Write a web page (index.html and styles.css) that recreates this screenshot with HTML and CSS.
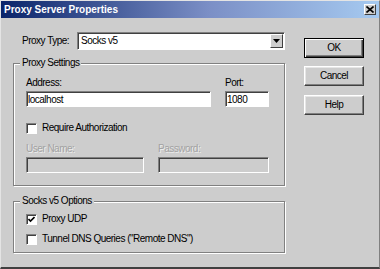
FILE: index.html
```html
<!DOCTYPE html>
<html lang="en">
<head>
    <meta charset="UTF-8">
    <title>Proxy Server Properties</title>
    <link rel="stylesheet" href="styles.css">
</head>
<body>
    <div class="window">
        <div class="titlebar">
            <span class="title">Proxy Server Properties</span>
            <span class="close-btn">
                <svg width="8" height="7" viewBox="0 0 8 7"><path d="M0.5 0.5L7.5 6.5M7.5 0.5L0.5 6.5" stroke="#000" stroke-width="1.6"/></svg>
            </span>
        </div>

        <div class="content">
            <div class="main">
                <div class="type-row">
                    <span class="type-label">Proxy Type:</span>
                    <div class="combo">
                        <span class="combo-text">Socks v5</span>
                        <span class="combo-btn">
                            <svg width="7" height="4" viewBox="0 0 7 4"><path d="M0 0H7L3.5 4Z" fill="#000"/></svg>
                        </span>
                    </div>
                </div>

                <fieldset class="group settings">
                    <legend>Proxy Settings</legend>
                    <div class="group-body">
                        <div class="row first">
                            <div class="field address">
                                <label>Address:</label>
                                <input type="text" value="localhost">
                            </div>
                            <div class="field port">
                                <label>Port:</label>
                                <input type="text" value="1080">
                            </div>
                        </div>
                        <div class="check auth">
                            <span class="box"></span>
                            <span>Require Authorization</span>
                        </div>
                        <div class="row">
                            <div class="field user disabled">
                                <label>User Name:</label>
                                <input type="text" disabled>
                            </div>
                            <div class="field pass disabled">
                                <label>Password:</label>
                                <input type="password" disabled>
                            </div>
                        </div>
                    </div>
                </fieldset>

                <fieldset class="group socks">
                    <legend>Socks v5 Options</legend>
                    <div class="group-body">
                        <div class="check udp">
                            <span class="box">
                                <svg width="7" height="7" viewBox="0 0 7 7"><path d="M0.5 3L2.5 5L6.5 1" stroke="#000" stroke-width="1.6" fill="none"/></svg>
                            </span>
                            <span>Proxy UDP</span>
                        </div>
                        <div class="check dns">
                            <span class="box"></span>
                            <span>Tunnel DNS Queries ("Remote DNS")</span>
                        </div>
                    </div>
                </fieldset>
            </div>

            <div class="buttons">
                <button class="btn default">OK</button>
                <button class="btn">Cancel</button>
                <button class="btn help">Help</button>
            </div>
        </div>
    </div>
</body>
</html>
```

FILE: styles.css
```css
body {
    margin: 0;
    font-family: "Liberation Sans", Arial, sans-serif;
    font-size: 10px;
    line-height: 12px;
    letter-spacing: -0.5px;
    color: #000;
    background: #cdcdcd;
}
.window {
    width: 380px;
    height: 269px;
    box-sizing: border-box;
    background: #cdcdcd;
    border-top: 1px solid #e4e4e4;
    border-left: 1px solid #e4e4e4;
    border-right: 1px solid #808080;
    border-bottom: 2px solid #404040;
    overflow: hidden;
}
.titlebar {
    height: 17px;
    display: flex;
    align-items: center;
    justify-content: space-between;
    padding: 0 3px 0 3px;
    background: linear-gradient(to right, #0a246a, #7b8fc6 55%, #a6caf0);
    color: #fff;
}
.title {
    font-weight: bold;
    letter-spacing: 0;
}
.close-btn {
    width: 12px;
    height: 11px;
    box-sizing: border-box;
    display: flex;
    align-items: center;
    justify-content: center;
    background: #cdcdcd;
    border: 1px solid;
    border-color: #fff #404040 #404040 #fff;
}

.content {
    display: flex;
    padding: 14px 0 0 12px;
}
.main {
    width: 272px;
}

/* proxy type combo */
.type-row {
    display: flex;
    align-items: center;
    height: 18px;
}
.type-label {
    width: 55px;
    padding-left: 9px;
}
.combo {
    flex: 1;
    height: 18px;
    box-sizing: border-box;
    display: flex;
    align-items: center;
    background: #fff;
    border: 1px solid;
    border-color: #808080 #fff #fff #808080;
    box-shadow: inset 1px 1px #404040;
}
.combo-text {
    flex: 1;
    padding-left: 3px;
}
.combo-btn {
    width: 13px;
    height: 14px;
    margin-right: 1px;
    box-sizing: border-box;
    display: flex;
    align-items: center;
    justify-content: center;
    background: #cdcdcd;
    border: 1px solid;
    border-color: #fff #404040 #404040 #fff;
}

/* group boxes */
.group {
    margin: 7px 0 0 0;
    padding: 0 0 12px 6px;
    border: 1px solid #808080;
    box-shadow: inset 1px 1px #fff, 1px 1px #fff;
}
.group legend {
    padding: 0 2px;
    background: #cdcdcd;
    line-height: 12px;
}
.group-body {
    padding-left: 6px;
}
.socks {
    margin-top: 9px;
    padding-bottom: 7px;
}

.row {
    display: flex;
    gap: 14px;
    margin-top: 9px;
}
.row.first {
    margin-top: 8px;
}
.field label {
    display: block;
    margin-bottom: 2px;
}
.field input {
    display: block;
    width: 100%;
    height: 16px;
    box-sizing: border-box;
    margin: 0;
    padding: 0 1px;
    font: inherit;
    letter-spacing: inherit;
    color: #000;
    background: #fff;
    border: 1px solid;
    border-color: #808080 #fff #fff #808080;
    box-shadow: inset 1px 1px #404040;
    outline: none;
}
.address { width: 185px; }
.port { width: 44px; }
.user { width: 118px; }
.pass { width: 111px; }
.disabled label {
    color: #a2a2a2;
    text-shadow: 1px 1px 0 #ececec;
}
.disabled input {
    background: #cdcdcd;
}

/* checkboxes */
.check {
    display: flex;
    align-items: center;
    gap: 5px;
    height: 12px;
}
.check .box {
    width: 11px;
    height: 11px;
    box-sizing: border-box;
    display: flex;
    align-items: center;
    justify-content: center;
    background: #fff;
    border: 1px solid;
    border-color: #808080 #fff #fff #808080;
    box-shadow: inset 1px 1px #404040;
}
.auth { margin-top: 15px; }
.udp { margin-top: 6px; }
.dns { margin-top: 8px; }

/* buttons */
.buttons {
    display: flex;
    flex-direction: column;
    gap: 8px;
    width: 60px;
    margin: 6px 0 0 19px;
}
.btn {
    height: 20px;
    padding: 0;
    font: inherit;
    letter-spacing: inherit;
    color: #000;
    background: #cdcdcd;
    border: 1px solid;
    border-color: #fff #404040 #404040 #fff;
    box-shadow: inset -1px -1px #808080, inset 1px 1px #e6e6e6;
}
.btn.default {
    border: 1px solid #000;
    box-shadow: inset 1px 1px #fff, inset -1px -1px #404040, inset -2px -2px #808080;
}
.btn.help {
    margin-top: 1px;
}
```
